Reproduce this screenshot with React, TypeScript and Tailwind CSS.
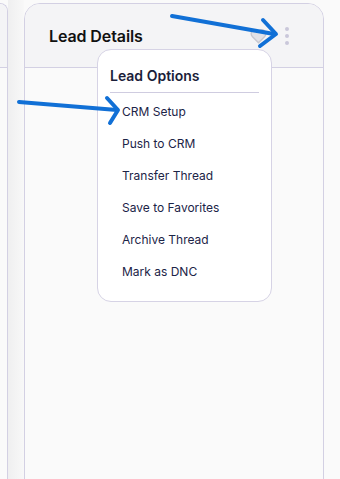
import React from "react";

const items = ["CRM Setup", "Push to CRM", "Transfer Thread", "Save to Favorites", "Archive Thread", "Mark as DNC"];

export default function App() {
  return (
    <div
      className="relative w-[340px] h-[479px] overflow-hidden bg-[#fafafa] flex"
      style={{ fontFamily: "Inter, 'Noto Sans', sans-serif" }}
    >
      {/* left panel */}
      <div className="w-[8px] mt-[3px] h-[500px] border-t border-r border-[#d3d0e3] rounded-tr-[12px] bg-[#fafafa] flex flex-col shrink-0">
        <div className="h-[64px] bg-[#f4f4f6] border-b border-[#d3d0e3] rounded-tr-[12px]" />
      </div>
      {/* gap */}
      <div className="w-[16px] shrink-0 bg-gradient-to-r from-[#efeff0] to-[#f8f8f8]" />
      {/* main card */}
      <div className="w-[300px] shrink-0 mt-[3px] h-[500px] border border-[#d3d0e3] rounded-t-[16px] bg-[#fafafa] flex flex-col">
        <div className="h-[64px] bg-[#f4f4f6] border-b border-[#d3d0e3] rounded-t-[15px] flex items-center pl-[24px] pr-[34px]">
          <div className="text-[16px] font-semibold text-[#111111] tracking-[-0.1px]">Lead Details</div>
          <div className="flex-1" />
          <svg width="17" height="16" viewBox="0 0 24 22" className="mr-[18px]">
            <path
              d="M12 20.5 L3.5 12 C1 9.5 1 5.5 3.5 3.5 C6 1.5 9.5 2 12 5 C14.5 2 18 1.5 20.5 3.5 C23 5.5 23 9.5 20.5 12 Z"
              fill="#e2e2e7"
              stroke="#c8c8d0"
              strokeWidth="2"
            />
          </svg>
          <div className="flex flex-col gap-[3px] items-center">
            <div className="w-[4px] h-[4px] rounded-full bg-[#c9c7da]" />
            <div className="w-[4px] h-[4px] rounded-full bg-[#c9c7da]" />
            <div className="w-[4px] h-[4px] rounded-full bg-[#c9c7da]" />
          </div>
        </div>
      </div>

      {/* dropdown */}
      <div className="absolute left-[97px] top-[49px] w-[175px] h-[253px] bg-white border border-[#d6d3e5] rounded-[14px] flex flex-col">
        <div className="pt-[16px] pl-[12px] text-[14px] leading-[20px] font-semibold text-[#1b1e3a]">Lead Options</div>
        <div className="mx-[12px] mt-[6px] h-px bg-[#cfcce0]" />
        <div className="pt-[3px] flex flex-col">
          {items.map((t) => (
            <div key={t} className="h-[32px] flex items-center pl-[24px] text-[12px] text-[#1c2447]">
              {t}
            </div>
          ))}
        </div>
      </div>

      {/* annotation arrows */}
      <svg className="absolute left-0 top-0 pointer-events-none" width="340" height="479">
        <g stroke="#1170d6" strokeWidth="4" strokeLinecap="round" strokeLinejoin="round" fill="none">
          <path d="M172 16 L274 34" />
          <path d="M263 20 L276 34 L260 46" />
          <path d="M19 102 L117 110" />
          <path d="M107 98 L118 110 L110 123" />
        </g>
      </svg>
    </div>
  );
}
